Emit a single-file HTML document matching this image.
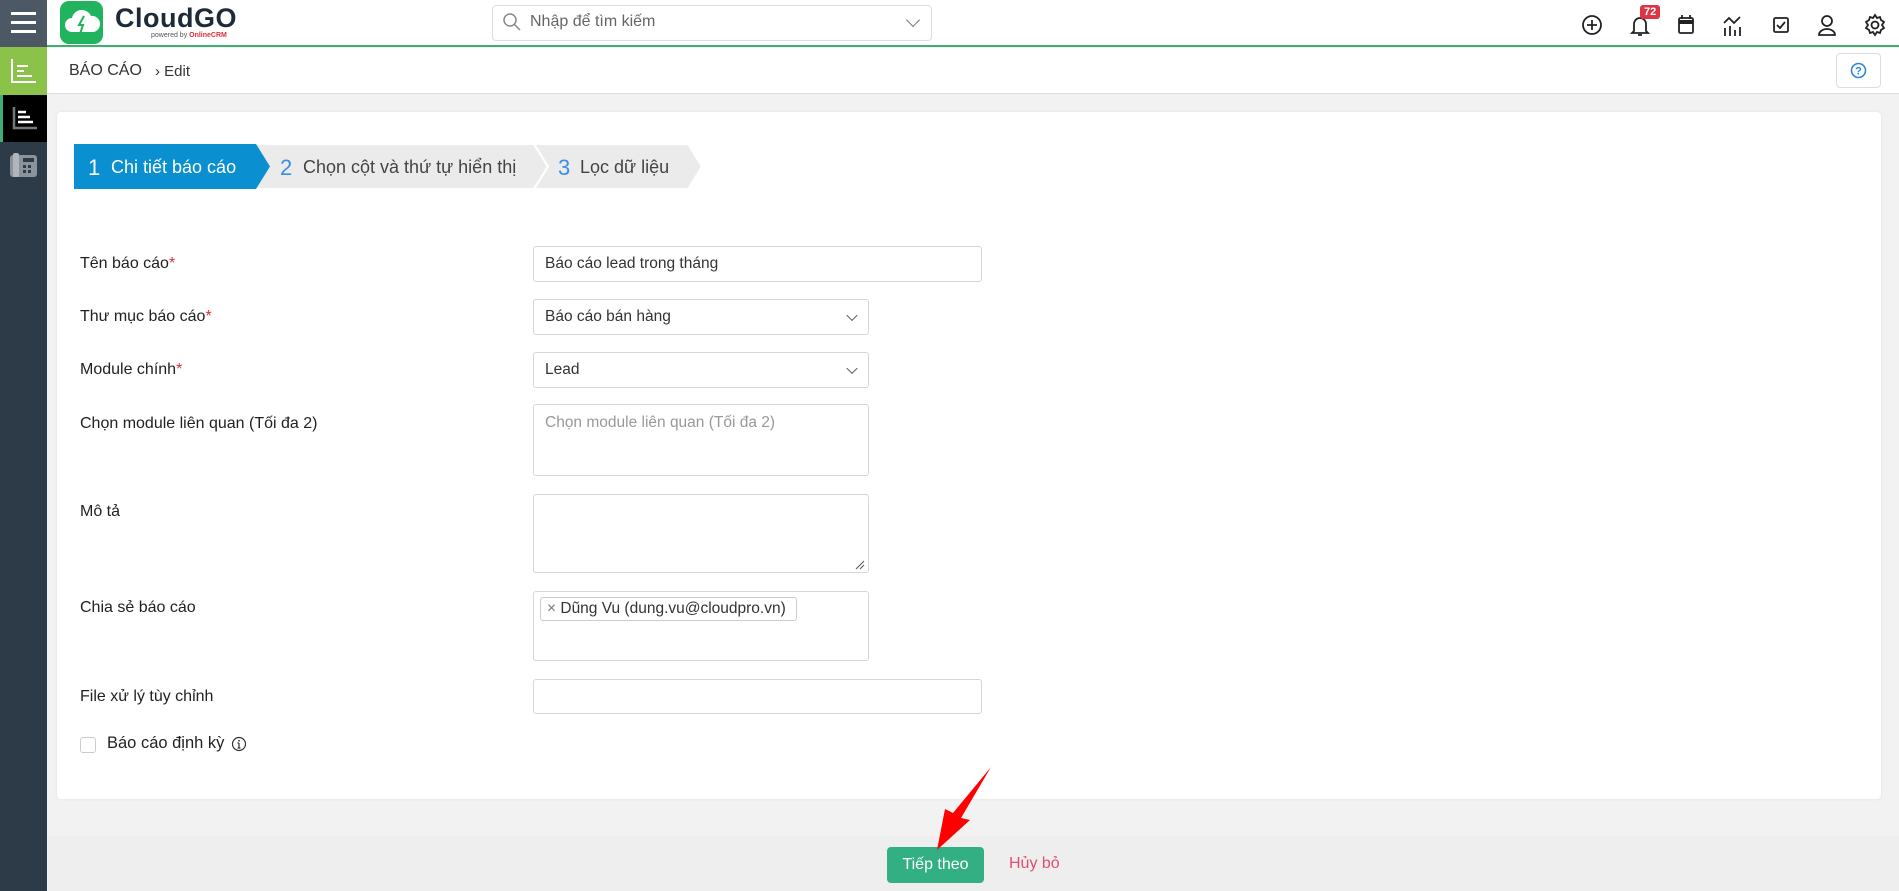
<!DOCTYPE html>
<html><head><meta charset="utf-8"><style>
*{box-sizing:border-box;margin:0;padding:0}
body{width:1899px;height:891px;overflow:hidden;background:#f2f2f2;font-family:"Liberation Sans","Noto Sans CJK SC",sans-serif;color:#222;position:relative}
.abs{position:absolute}
.sb{left:0;top:0;width:47px;height:891px;background:#2d3a47}
.hdr{left:47px;top:0;width:1852px;height:47px;background:#fff;border-bottom:2px solid #3fae72}
.bc{left:47px;top:48px;width:1852px;height:46px;background:#fff;border-bottom:1px solid #ddd}
.card{left:57px;top:112px;width:1824px;height:687px;background:#fff;border-radius:4px;box-shadow:0 0 3px rgba(0,0,0,.08)}
.lbl{left:80px;font-size:16px;color:#222}
.inp{left:533px;border:1px solid #d6d6d6;border-radius:3px;background:#fff;font-size:15.5px;padding-left:11px;color:#333}
.chev{position:absolute;right:12px;top:50%;width:8px;height:8px;border-right:1.5px solid #555;border-bottom:1.5px solid #555;transform:translateY(-70%) rotate(45deg)}
.req{color:#d9303a}
</style></head><body>
<div class="abs sb"></div>
<div class="abs" style="left:0;top:0;width:47px;height:47px;background:#4c5863"></div>
<div class="abs" style="left:11px;top:12px;width:25px;height:3px;background:#fff;box-shadow:0 9px 0 #fff,0 18px 0 #fff"></div>
<div class="abs" style="left:0;top:47px;width:47px;height:48px;background:#8bc34a"></div>
<svg class="abs" style="left:10px;top:58px" width="27" height="26"><path d="M2 1V24H26" stroke="#fff" stroke-width="2" fill="none"/><path d="M7 8H18M7 13H14M7 18H22" stroke="#fff" stroke-width="2"/></svg>
<div class="abs" style="left:0;top:95px;width:47px;height:47px;background:#000;border-left:3px solid #3fae72"></div>
<svg class="abs" style="left:12px;top:106px" width="26" height="24"><path d="M2 1V22H25" stroke="#777" stroke-width="2.5" fill="none"/><path d="M6 6H14M6 11H18M6 16H21" stroke="#fff" stroke-width="2.5"/></svg>
<svg class="abs" style="left:10px;top:153px" width="27" height="24"><rect x="0" y="2" width="27" height="22" rx="3" fill="#8a939c"/><rect x="3" y="0" width="6" height="24" rx="2" fill="#b0b6bc"/><rect x="13" y="5" width="11" height="4" fill="#2d3a47"/><g fill="#2d3a47"><rect x="13" y="12" width="3" height="3"/><rect x="18" y="12" width="3" height="3"/><rect x="13" y="17" width="3" height="3"/><rect x="18" y="17" width="3" height="3"/></g></svg>

<div class="abs hdr"></div>
<div class="abs" style="left:60px;top:1px;width:43px;height:43px;background:#22b35e;border-radius:9px"></div>
<svg class="abs" style="left:64px;top:8px" width="36" height="28"><path d="M8 24a7 7 0 0 1 0-14a10 10 0 0 1 19-2a8 8 0 0 1 2 16z" fill="#fff"/><path d="M20 8l-5 9h4l-3 9" stroke="#22b35e" stroke-width="2" fill="none"/></svg>
<div class="abs" style="left:115px;top:3px;font-size:27px;font-weight:bold;color:#1e2a38;letter-spacing:.5px">CloudGO</div>
<div class="abs" style="left:151px;top:32px;font-size:7px;color:#555">powered by <span style="color:#d9303a;font-weight:bold">OnlineCRM</span></div>
<div class="abs" style="left:492px;top:5px;width:440px;height:36px;border:1px solid #ddd;border-radius:4px;background:#fff"></div>
<svg class="abs" style="left:503px;top:13px" width="18" height="18"><circle cx="7" cy="7" r="6" stroke="#888" stroke-width="1.5" fill="none"/><path d="M11.5 11.5L17 17" stroke="#888" stroke-width="1.5"/></svg>
<div class="abs" style="left:530px;top:13px;font-size:16px;color:#666">Nhập để tìm kiếm</div>
<div class="abs" style="left:908px;top:15px;width:10px;height:10px;border-right:1.5px solid #777;border-bottom:1.5px solid #777;transform:rotate(45deg)"></div>
<svg class="abs" style="left:1580px;top:12px" width="310" height="26" fill="none" stroke="#222" stroke-width="1.8">
<circle cx="12" cy="13" r="9"/><path d="M12 8v10M7 13h10"/>
<path d="M54 19V12a6 6 0 0 1 12 0v7l2 2H52zM58 23h4"/>
<rect x="99" y="6" width="14" height="15" rx="1.5"/><path d="M99 10h14" stroke-width="4"/><path d="M102 3v4M110 3v4"/>
<path d="M145 24v-8M150 24v-10M155 24v-6M160 24v-9M144 11l5-5 5 5 6-6"/>
<rect x="194" y="6" width="14" height="14" rx="1.5"/><path d="M197 13l3 3 5-6"/>
<circle cx="247" cy="9" r="5"/><path d="M239 23a8 6 0 0 1 16 0z"/>
<circle cx="295" cy="13" r="3.5"/><path d="M295 3l2 3 3-1 1 3 3 2-2 3 2 3-3 2-1 3-3-1-2 3-2-3-3 1-1-3-3-2 2-3-2-3 3-2 1-3 3 1z"/>
</svg>
<div class="abs" style="left:1640px;top:5px;background:#dc3545;color:#fff;font-size:11px;font-weight:bold;padding:1px 4px;border-radius:3px">72</div>

<div class="abs bc"></div>
<div class="abs" style="left:69px;top:62px;font-size:16px;color:#333">BÁO CÁO</div>
<div class="abs" style="left:155px;top:63px;font-size:15px;color:#333">› Edit</div>
<div class="abs" style="left:1836px;top:53px;width:45px;height:35px;border:1px solid #ddd;border-radius:4px;background:#fff"></div>
<svg class="abs" style="left:1850px;top:62px" width="17" height="17"><circle cx="8.5" cy="8.5" r="7" stroke="#2c88d9" stroke-width="1.6" fill="none"/><text x="8.5" y="12.5" font-size="11" font-weight="bold" text-anchor="middle" fill="#2c88d9" font-family="Liberation Sans">?</text></svg>

<div class="abs card"></div>
<svg class="abs" style="left:74px;top:144px" width="640" height="45">
<polygon points="168,0 460,0 474,22.5 460,45 168,45 182,22.5" fill="#ebebeb" stroke="#fff" stroke-width="2"/>
<polygon points="460,0 614,0 628,22.5 614,45 460,45 474,22.5" fill="#ebebeb" stroke="#fff" stroke-width="2"/>
<polygon points="0,0 182,0 196,22.5 182,45 0,45" fill="#0a8fd0"/>
<text x="14" y="31" font-size="22" fill="#fff" font-family="Liberation Sans">1</text>
<text x="37" y="29" font-size="18" fill="#fff" font-family="Liberation Sans">Chi tiết báo cáo</text>
<text x="206" y="31" font-size="22" fill="#3a8ee6" font-family="Liberation Sans">2</text>
<text x="229" y="29" font-size="18" fill="#444" font-family="Liberation Sans">Chọn cột và thứ tự hiển thị</text>
<text x="484" y="31" font-size="22" fill="#3a8ee6" font-family="Liberation Sans">3</text>
<text x="506" y="29" font-size="18" fill="#444" font-family="Liberation Sans">Lọc dữ liệu</text>
</svg>

<div class="abs lbl" style="top:255px">Tên báo cáo<span class="req">*</span></div>
<div class="abs inp" style="top:246px;width:449px;height:36px;line-height:34px">Báo cáo lead trong tháng</div>
<div class="abs lbl" style="top:308px">Thư mục báo cáo<span class="req">*</span></div>
<div class="abs inp" style="top:299px;width:336px;height:36px;line-height:34px">Báo cáo bán hàng<span class="chev"></span></div>
<div class="abs lbl" style="top:361px">Module chính<span class="req">*</span></div>
<div class="abs inp" style="top:352px;width:336px;height:36px;line-height:34px">Lead<span class="chev"></span></div>
<div class="abs lbl" style="top:415px">Chọn module liên quan (Tối đa 2)</div>
<div class="abs inp" style="top:404px;width:336px;height:72px;padding-top:9px;color:#999">Chọn module liên quan (Tối đa 2)</div>
<div class="abs lbl" style="top:503px">Mô tả</div>
<div class="abs inp" style="top:494px;width:336px;height:79px"></div>
<svg class="abs" style="left:855px;top:560px" width="10" height="10"><path d="M1 9L9 1M5 9L9 5" stroke="#555"/></svg>
<div class="abs lbl" style="top:599px">Chia sẻ báo cáo</div>
<div class="abs inp" style="top:591px;width:336px;height:70px"></div>
<div class="abs" style="left:540px;top:597px;width:257px;height:24px;border:1px solid #ccc;border-radius:3px;font-size:15.5px;line-height:22px;padding-left:6px;color:#333;white-space:nowrap;overflow:hidden"><span style="color:#777">×</span> Dũng Vu (dung.vu@cloudpro.vn)</div>
<div class="abs lbl" style="top:688px">File xử lý tùy chỉnh</div>
<div class="abs inp" style="top:679px;width:449px;height:35px"></div>
<div class="abs" style="left:80px;top:737px;width:16px;height:16px;border:1px solid #ccc;border-radius:3px"></div>
<div class="abs" style="left:107px;top:734px;font-size:16.5px">Báo cáo định kỳ</div>
<svg class="abs" style="left:231px;top:736px" width="16" height="16"><circle cx="8" cy="8" r="6.5" stroke="#333" stroke-width="1.2" fill="none"/><path d="M8 7v5M6.5 12h3M6.5 7h1.5" stroke="#333" stroke-width="1.2"/><circle cx="8" cy="4.8" r=".9" fill="#333"/></svg>

<div class="abs" style="left:48px;top:836px;width:1851px;height:55px;background:#eeeeee"></div>
<div class="abs" style="left:887px;top:847px;width:97px;height:36px;background:#32b083;border-radius:4px;color:#fff;font-size:16px;text-align:center;line-height:36px">Tiếp theo</div>
<div class="abs" style="left:1009px;top:855px;font-size:16px;color:#e0506a">Hủy bỏ</div>
<svg class="abs" style="left:920px;top:760px" width="80" height="95"><path d="M71 7L41 58L50 60L17 90L25 49L33 53Z" fill="#f00"/></svg>
</body></html>
